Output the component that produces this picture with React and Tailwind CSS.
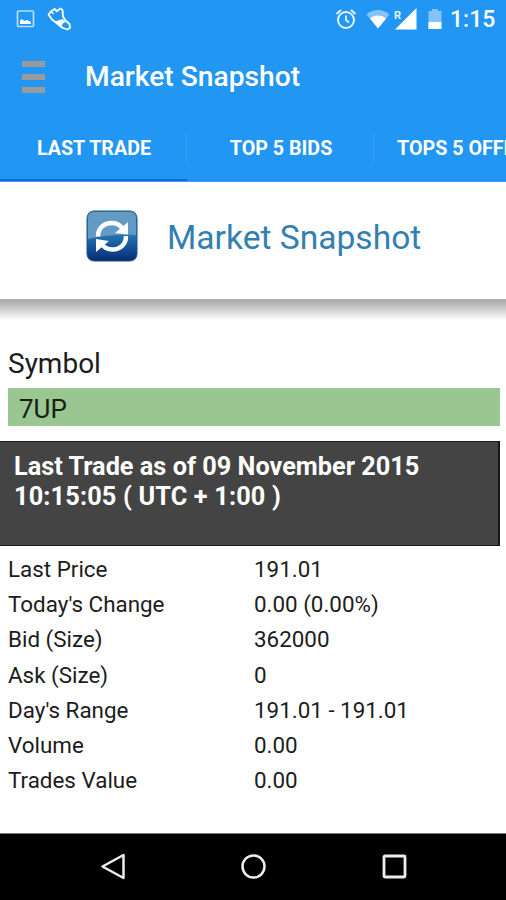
import React from "react";

const tabs = ["LAST TRADE", "TOP 5 BIDS", "TOPS 5 OFFE"];

const rows = [
  { label: "Last Price", value: "191.01" },
  { label: "Today's Change", value: "0.00 (0.00%)" },
  { label: "Bid (Size)", value: "362000" },
  { label: "Ask (Size)", value: "0" },
  { label: "Day's Range", value: "191.01 - 191.01" },
  { label: "Volume", value: "0.00" },
  { label: "Trades Value", value: "0.00" },
];

const StatusBar = () => (
  <div className="flex h-[38px] shrink-0 items-center text-white">
    <svg className="ml-4 h-[18px] w-[19px]" viewBox="0 0 19 18" fill="none">
      <rect x="1.5" y="1" width="16" height="15.5" rx="1" stroke="#b9defc" strokeWidth="1.7" />
      <path d="M4 14v-3.500l2-1.500 2 2 3-1 4 2v2z" fill="#fff" />
    </svg>
    <svg className="ml-3 h-6 w-6" viewBox="0 0 24 24" fill="none">
      <path
        d="M1.500 7.500L4 4.500 7.500 2l2.500 2L13.500 1.500l2 1.500.5 6.500 2.500 4 4 3.500.5 4-3 1.500-5-2-5.500-4.500L5 12.500z"
        stroke="#fff"
        strokeWidth="1.800"
        strokeLinejoin="round"
      />
      <path d="M8 14.500l7.500-2.500 3 3-2.500 1.500-2 3.500z" fill="#fff" />
      <path d="M4 4.500l2.500 2.500M7.500 2l2.500 3" stroke="#fff" strokeWidth="1.300" />
    </svg>

    <svg className="ml-[264px] h-[22px] w-[22px]" viewBox="0 0 22 22" fill="none" stroke="#e6f3fe">
      <circle cx="11" cy="12" r="8" strokeWidth="2" />
      <path d="M11 7.500V12l3 2.500" strokeWidth="1.800" />
      <path d="M1.500 6L6 2M20.500 6L16 2" strokeWidth="2" />
    </svg>
    <svg className="ml-[9px] h-5 w-6" viewBox="0 0 24 20">
      <path d="M12 19.500L.5 5.500C3.500 2.500 7.500 1 12 1s8.500 1.500 11.500 4.500z" fill="#84c2f9" />
      <path d="M12 19.500L4 9.500C6 7.500 9 6.500 12 6.500s6 1 8 3z" fill="#fff" />
    </svg>
    <svg className="ml-1 h-[22px] w-[23px]" viewBox="0 0 23 22">
      <path d="M22.500 0v21.500H1z" fill="#fff" />
      <text x="0" y="10.500" fontSize="11" fontWeight="700" fill="#e6f3fe">R</text>
    </svg>
    <svg className="ml-[10px] h-[22px] w-4" viewBox="0 0 16 22">
      <path d="M5 1h6v2h3.500v18h-13V3H5z" fill="#84c2f9" />
      <path d="M1.500 14h13v7h-13z" fill="#fff" />
    </svg>
    <span className="ml-[7px] text-[23px] font-medium leading-none">1:15</span>
  </div>
);

const TitleBar = () => (
  <div className="flex h-[78px] shrink-0 items-center pl-[22px]">
    <div className="flex w-[23px] flex-col gap-[7px]">
      <div className="h-[6px] bg-[#999a9c]"></div>
      <div className="h-[6px] bg-[#999a9c]"></div>
      <div className="h-[6px] bg-[#999a9c]"></div>
    </div>
    <h1 className="ml-10 text-[28.200px] font-medium leading-none text-white">Market Snapshot</h1>
  </div>
);

const Tabs = () => (
  <div className="flex h-[66px] shrink-0 overflow-hidden border-b border-[#39a0f4]">
    {tabs.map((tab, i) => (
      <div
        key={tab}
        className={`flex w-[187px] shrink-0 items-center pt-[3px] ${
          i === 0 ? "border-b-2 border-[#0d6ccd]" : "border-b-2 border-[#1e90ee]"
        }`}
      >
        <span
          className={`flex-1 whitespace-nowrap text-[19.700px] font-bold leading-none text-white ${
            i === 2 ? "pl-[23px]" : "pl-[2px] text-center"
          }`}
        >
          {tab}
        </span>
        {i < 2 && <div className="h-8 w-px bg-[#329cf2]"></div>}
      </div>
    ))}
  </div>
);

const RefreshIcon = () => (
  <svg className="h-[52px] w-[52px]" viewBox="0 0 52 52">
    <defs>
      <linearGradient id="tile" x1="0" y1="0" x2="0" y2="1">
        <stop offset="0" stopColor="#3c83b6" />
        <stop offset="0.5" stopColor="#2273ae" />
        <stop offset="0.8" stopColor="#10488f" />
        <stop offset="1" stopColor="#082b6c" />
      </linearGradient>
      <linearGradient id="gloss" x1="0" y1="0" x2="0" y2="1">
        <stop offset="0" stopColor="#fff" stopOpacity="0.2" />
        <stop offset="1" stopColor="#fff" stopOpacity="0.3" />
      </linearGradient>
    </defs>
    <rect x="1" y="1" width="50" height="50" rx="7" fill="url(#tile)" stroke="#1d5589" />
    <path d="M2 8a6 6 0 016-6h36a6 6 0 016 6v17c-16-1-32 0-48 4z" fill="url(#gloss)" />
    <g fill="none" stroke="#fff" strokeWidth="4.500">
      <path d="M12 26.500C12 17.500 18.500 13 25.500 13c4.500 0 8 1.500 10.500 5" />
      <path d="M40 26C40 35 33.500 39.500 26.500 39.500c-4.500 0-8-1.500-10.500-5" />
    </g>
    <path d="M42 12v12.500L29 23z" fill="#fff" />
    <path d="M10 42V29l13 2z" fill="#fff" />
  </svg>
);

const NavBar = () => (
  <div className="flex h-[67px] shrink-0 items-center justify-between border-t border-[#777] bg-black pl-[100px] pr-[98px]">
    <svg className="h-7 w-7" viewBox="0 0 28 28" fill="none">
      <path d="M2.500 13.500L23.500 2v23z" stroke="#ededed" strokeWidth="2.500" strokeLinejoin="round" />
    </svg>
    <svg className="h-7 w-7" viewBox="0 0 28 28" fill="none">
      <circle cx="13.500" cy="13.500" r="11" stroke="#ededed" strokeWidth="2.500" />
    </svg>
    <svg className="h-7 w-7" viewBox="0 0 28 28" fill="none">
      <rect x="4" y="3" width="21" height="21" rx="1" stroke="#ededed" strokeWidth="2.800" />
    </svg>
  </div>
);

const App = () => {
  return (
    <div className="flex h-[900px] w-[506px] flex-col overflow-hidden bg-white font-['Roboto',sans-serif]">
      <header className="flex flex-col bg-[#2196f3]">
        <StatusBar />
        <TitleBar />
        <Tabs />
      </header>

      <div className="flex h-[117px] shrink-0 items-center pl-[86px] pb-[9px]">
        <RefreshIcon />
        <h2 className="ml-[29px] mt-[3px] whitespace-nowrap text-[33.600px] leading-none text-[#347fb2]">
          Market Snapshot
        </h2>
      </div>
      <div className="h-[22px] shrink-0 bg-linear-to-b from-[#acacac] from-10% via-[#d2d2d2] via-50% to-white to-95%"></div>

      <main className="flex flex-1 flex-col">
        <p className="mt-[27px] h-10 pl-2 text-[28px] leading-[32px] text-[#1c1c1c]">Symbol</p>
        <div className="ml-2 mr-[6px] flex h-[38px] items-center bg-[#9ac791] pl-[11px] pt-[3px] text-[26px] leading-none text-[#152012]">
          7UP
        </div>
        <div className="mr-[6px] mt-[15px] h-[105px] border-y border-r-2 border-[#181818] bg-[#444] pl-[14px] pt-[10px] text-[25.300px] font-bold leading-[29.500px] text-white">
          <p className="whitespace-nowrap">Last Trade as of 09 November 2015</p>
          <p className="whitespace-nowrap tracking-[0.150px]">10:15:05 ( UTC + 1:00 )</p>
        </div>
        <div className="flex flex-col pl-2 pt-[6px] text-[22.400px] leading-[35.200px] text-[#1c1c1c]">
          {rows.map((row) => (
            <div key={row.label} className="flex">
              <span className="w-[246px]">{row.label}</span>
              <span>{row.value}</span>
            </div>
          ))}
        </div>
      </main>

      <NavBar />
    </div>
  );
};

export default App;
